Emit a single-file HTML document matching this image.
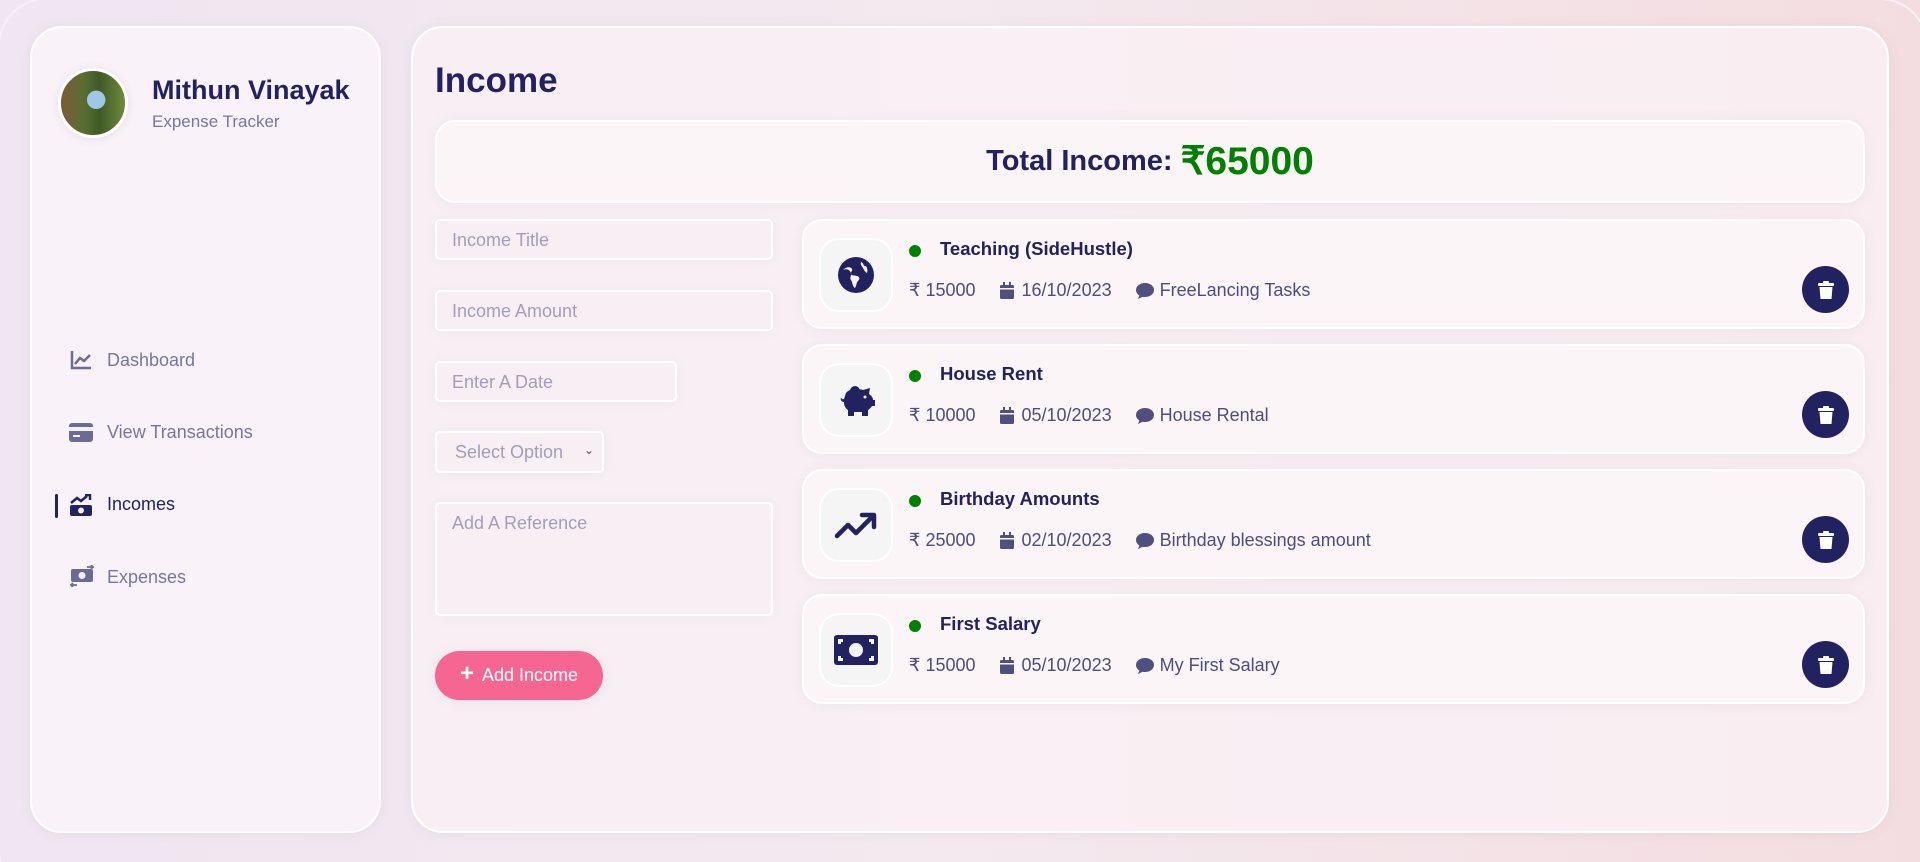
<!DOCTYPE html>
<html style="overflow:hidden;height:862px"><head><meta charset="utf-8"><style>
*{box-sizing:border-box;margin:0;padding:0}
body{width:1920px;height:862px;overflow:hidden;font-family:"Liberation Sans",sans-serif;background:linear-gradient(90deg,#efe6f1 0%,#f3e9ef 50%,#f4dde0 100%);position:relative;color:#222260}
.clip{position:absolute;left:0;top:0;width:1920px;height:862px;overflow:hidden}
.outer{position:absolute;left:-2px;top:-2px;width:1930px;height:900px;border-radius:48px;border:2px solid #f6f1f6}
.side{position:absolute;left:30px;top:26px;width:351px;height:807px;background:rgba(249,243,248,.9);border:2px solid #fff;border-radius:32px;box-shadow:0 1px 15px rgba(0,0,0,.05)}
.main{position:absolute;left:411px;top:26px;width:1478px;height:807px;background:rgba(249,240,244,.85);border:2px solid #fff;border-radius:32px;box-shadow:0 1px 15px rgba(0,0,0,.05)}
.abs{position:absolute}
.av{left:58px;top:68px;width:70px;height:70px;border-radius:50%;border:3px solid #fff;background:radial-gradient(circle at 55% 45%,#9fc7e6 0 18%,transparent 19%),linear-gradient(90deg,#7c5a3a 0%,#5a6e32 35%,#3f5a28 60%,#6f8a3a 100%);box-shadow:0 1px 10px rgba(0,0,0,.08)}
.nav{font-size:18px;color:rgba(34,34,96,.6)}
.inp{background:transparent;border:2px solid #fff;border-radius:5px;box-shadow:0 1px 15px rgba(0,0,0,.04);font-size:18px;color:rgba(34,34,96,.4);padding:9px 15px}
.card{left:802px;width:1063px;height:110px;background:#fbf5f8;border:2px solid #fff;border-radius:20px;box-shadow:0 1px 15px rgba(0,0,0,.05)}
.ib{position:absolute;left:15px;top:17px;width:74px;height:74px;background:#f5f5f5;border:2px solid #fff;border-radius:20px;display:flex;align-items:center;justify-content:center}
.dot{position:absolute;left:105px;top:24px;width:12px;height:12px;border-radius:50%;background:#008000}
.tt{position:absolute;left:136px;top:17px;font-size:18.5px;font-weight:bold;color:#222260}
.meta{position:absolute;left:105px;top:59px;font-size:18px;color:rgba(34,34,96,.8);display:flex;align-items:center;white-space:nowrap}
.meta span{margin-right:24px;display:flex;align-items:center}
.del{position:absolute;right:14px;top:45px;width:47px;height:47px;border-radius:50%;background:#222260;display:flex;align-items:center;justify-content:center}
</style></head><body>
<div class="clip">
<div class="outer"></div>
<div class="side"></div>
<div class="abs av"></div>
<div class="abs" style="left:152px;top:75px;font-size:27px;font-weight:bold;color:#222260">Mithun Vinayak</div>
<div class="abs" style="left:152px;top:112px;font-size:17px;color:rgba(34,34,96,.6)">Expense Tracker</div>

<svg class="abs" style="left:70px;top:350px" width="22" height="20" viewBox="0 0 22 20"><path d="M2 1v17h19" stroke="#6b6b95" stroke-width="2.5" fill="none"/><path d="M5 14l5-6 4 3 6-6" stroke="#6b6b95" stroke-width="2.5" fill="none"/></svg>
<div class="abs nav" style="left:107px;top:350px">Dashboard</div>
<svg class="abs" style="left:69px;top:423px" width="24" height="19" viewBox="0 0 24 19"><rect x="0" y="0" width="24" height="19" rx="3" fill="#6b6b95"/><rect x="0" y="4" width="24" height="4" fill="#f6eff6"/><rect x="4" y="12" width="7" height="2" fill="#f6eff6"/></svg>
<div class="abs nav" style="left:107px;top:422px">View Transactions</div>
<div class="abs" style="left:55px;top:494px;width:3px;height:24px;background:#222260;border-radius:2px"></div>
<svg class="abs" style="left:69px;top:494px" width="24" height="22" viewBox="0 0 24 22"><path d="M2 9l6-5 4 3 6-5" stroke="#222260" stroke-width="2.5" fill="none"/><path d="M16 1h5v5" stroke="#222260" stroke-width="2.5" fill="none"/><rect x="1" y="11" width="22" height="11" rx="2" fill="#222260"/><circle cx="12" cy="16.5" r="3" fill="#f6eff6"/></svg>
<div class="abs nav" style="left:107px;top:494px;color:#222260">Incomes</div>
<svg class="abs" style="left:69px;top:565px" width="26" height="22" viewBox="0 0 26 22"><rect x="2" y="4" width="22" height="13" rx="2" fill="#6b6b95"/><circle cx="13" cy="10.5" r="3.5" fill="#f6eff6"/><path d="M18 2h6M22 0l2 2-2 2M2 20h6M4 18l-2 2 2 2" stroke="#6b6b95" stroke-width="1.8" fill="none"/></svg>
<div class="abs nav" style="left:107px;top:567px">Expenses</div>

<div class="main"></div>
<div class="abs" style="left:435px;top:61px;font-size:35px;font-weight:bold;color:#222260">Income</div>
<div class="abs" style="left:435px;top:120px;width:1430px;height:83px;background:#fbf5f8;border:2px solid #fff;border-radius:20px;box-shadow:0 1px 15px rgba(0,0,0,.05);display:flex;align-items:center;justify-content:center;font-size:29px;font-weight:bold;color:#222260">Total Income:&nbsp;<span style="color:#008000;font-size:39px">₹65000</span></div>

<div class="abs inp" style="left:435px;top:219px;width:338px;height:41px">Income Title</div>
<div class="abs inp" style="left:435px;top:290px;width:338px;height:41px">Income Amount</div>
<div class="abs inp" style="left:435px;top:361px;width:242px;height:41px">Enter A Date</div>
<div class="abs inp" style="left:435px;top:431px;width:169px;height:42px;padding-left:18px">Select Option <span style="position:absolute;right:8px;top:10px;font-size:12px;color:#555">⌄</span></div>
<div class="abs inp" style="left:435px;top:502px;width:338px;height:114px">Add A Reference</div>
<div class="abs" style="left:435px;top:651px;width:168px;height:49px;background:#f56692;border-radius:25px;color:#fff;font-size:18px;display:flex;align-items:center;justify-content:center;box-shadow:0 1px 15px rgba(0,0,0,.06)"><span style="font-size:24px;font-weight:bold;margin-right:8px;margin-top:-3px">+</span>Add Income</div>

<div class="abs card" style="top:219px">
 <div class="ib"><svg width="38" height="38" viewBox="0 0 38 38"><circle cx="19" cy="19" r="18" fill="#222260"/><path d="M6 14c4-2 7 0 8 3s-2 4 0 7 1 6 4 8c2-3 1-5 3-7s2-4-1-5-5 0-6-2 2-3 1-5-5-3-9 1z" fill="#f5f5f5"/><path d="M24 6c3 1 2 4 4 4s3 4 2 7c-2-1-3-3-4-5s-3-3-2-6z" fill="#f5f5f5"/></svg></div>
 <div class="dot"></div><div class="tt">Teaching (SideHustle)</div>
 <div class="meta"><span>₹&nbsp;15000</span><span><svg width="14" height="17" viewBox="0 0 14 17" style="margin-right:8px"><rect x="0" y="3" width="14" height="14" rx="1.5" fill="#4f4f80"/><rect x="3" y="0" width="2" height="4" fill="#4f4f80"/><rect x="9" y="0" width="2" height="4" fill="#4f4f80"/><rect x="0" y="6" width="14" height="1.5" fill="#fbf5f8"/></svg>16/10/2023</span><span><svg width="18" height="16" viewBox="0 0 18 16" style="margin-right:6px"><ellipse cx="9" cy="7" rx="9" ry="7" fill="#4f4f80"/><path d="M2 16l2-5 4 2z" fill="#4f4f80"/></svg>FreeLancing Tasks</span></div>
 <div class="del"><svg width="16" height="18" viewBox="0 0 16 18"><rect x="0" y="2" width="16" height="3" rx="1" fill="#fff"/><rect x="5" y="0" width="6" height="3" rx="1" fill="#fff"/><path d="M1.5 6h13l-1 12h-11z" fill="#fff"/></svg></div>
</div>
<div class="abs card" style="top:344px">
 <div class="ib"><svg width="40" height="34" viewBox="0 0 40 34"><path d="M10 10c3-4 10-5 17-3l7-2-1 6c3 2 4 4 4 6h2v6h-3c-1 2-3 3-4 4v6h-6v-4h-8v4h-6v-6c-3-2-4-5-4-8-2 0-4-2-3-4 1 0 1 2 3 1 0-1 1-2 1-3z" fill="#222260"/><path d="M14 8a5 5 0 0 1 10 0z" fill="#222260"/><circle cx="29" cy="14" r="1.5" fill="#f5f5f5"/></svg></div>
 <div class="dot"></div><div class="tt">House Rent</div>
 <div class="meta"><span>₹&nbsp;10000</span><span><svg width="14" height="17" viewBox="0 0 14 17" style="margin-right:8px"><rect x="0" y="3" width="14" height="14" rx="1.5" fill="#4f4f80"/><rect x="3" y="0" width="2" height="4" fill="#4f4f80"/><rect x="9" y="0" width="2" height="4" fill="#4f4f80"/><rect x="0" y="6" width="14" height="1.5" fill="#fbf5f8"/></svg>05/10/2023</span><span><svg width="18" height="16" viewBox="0 0 18 16" style="margin-right:6px"><ellipse cx="9" cy="7" rx="9" ry="7" fill="#4f4f80"/><path d="M2 16l2-5 4 2z" fill="#4f4f80"/></svg>House Rental</span></div>
 <div class="del"><svg width="16" height="18" viewBox="0 0 16 18"><rect x="0" y="2" width="16" height="3" rx="1" fill="#fff"/><rect x="5" y="0" width="6" height="3" rx="1" fill="#fff"/><path d="M1.5 6h13l-1 12h-11z" fill="#fff"/></svg></div>
</div>
<div class="abs card" style="top:469px">
 <div class="ib"><svg width="44" height="28" viewBox="0 0 44 28"><path d="M3 25l11-11 8 8 16-16" stroke="#222260" stroke-width="4.5" fill="none" stroke-linecap="round" stroke-linejoin="round"/><path d="M28 4h12v12" stroke="#222260" stroke-width="4.5" fill="none" stroke-linecap="round" stroke-linejoin="round"/></svg></div>
 <div class="dot"></div><div class="tt">Birthday Amounts</div>
 <div class="meta"><span>₹&nbsp;25000</span><span><svg width="14" height="17" viewBox="0 0 14 17" style="margin-right:8px"><rect x="0" y="3" width="14" height="14" rx="1.5" fill="#4f4f80"/><rect x="3" y="0" width="2" height="4" fill="#4f4f80"/><rect x="9" y="0" width="2" height="4" fill="#4f4f80"/><rect x="0" y="6" width="14" height="1.5" fill="#fbf5f8"/></svg>02/10/2023</span><span><svg width="18" height="16" viewBox="0 0 18 16" style="margin-right:6px"><ellipse cx="9" cy="7" rx="9" ry="7" fill="#4f4f80"/><path d="M2 16l2-5 4 2z" fill="#4f4f80"/></svg>Birthday blessings amount</span></div>
 <div class="del"><svg width="16" height="18" viewBox="0 0 16 18"><rect x="0" y="2" width="16" height="3" rx="1" fill="#fff"/><rect x="5" y="0" width="6" height="3" rx="1" fill="#fff"/><path d="M1.5 6h13l-1 12h-11z" fill="#fff"/></svg></div>
</div>
<div class="abs card" style="top:594px">
 <div class="ib"><svg width="46" height="32" viewBox="0 0 46 32"><rect x="1" y="1" width="44" height="30" rx="3" fill="#222260"/><circle cx="23" cy="16" r="7" fill="#f5f5f5"/><path d="M5 5h5v3h-2v2h-3zM41 5h-5v3h2v2h3zM5 27h5v-3h-2v-2h-3zM41 27h-5v-3h2v-2h3z" fill="#f5f5f5"/></svg></div>
 <div class="dot"></div><div class="tt">First Salary</div>
 <div class="meta"><span>₹&nbsp;15000</span><span><svg width="14" height="17" viewBox="0 0 14 17" style="margin-right:8px"><rect x="0" y="3" width="14" height="14" rx="1.5" fill="#4f4f80"/><rect x="3" y="0" width="2" height="4" fill="#4f4f80"/><rect x="9" y="0" width="2" height="4" fill="#4f4f80"/><rect x="0" y="6" width="14" height="1.5" fill="#fbf5f8"/></svg>05/10/2023</span><span><svg width="18" height="16" viewBox="0 0 18 16" style="margin-right:6px"><ellipse cx="9" cy="7" rx="9" ry="7" fill="#4f4f80"/><path d="M2 16l2-5 4 2z" fill="#4f4f80"/></svg>My First Salary</span></div>
 <div class="del"><svg width="16" height="18" viewBox="0 0 16 18"><rect x="0" y="2" width="16" height="3" rx="1" fill="#fff"/><rect x="5" y="0" width="6" height="3" rx="1" fill="#fff"/><path d="M1.5 6h13l-1 12h-11z" fill="#fff"/></svg></div>
</div>
</div>
</body></html>
